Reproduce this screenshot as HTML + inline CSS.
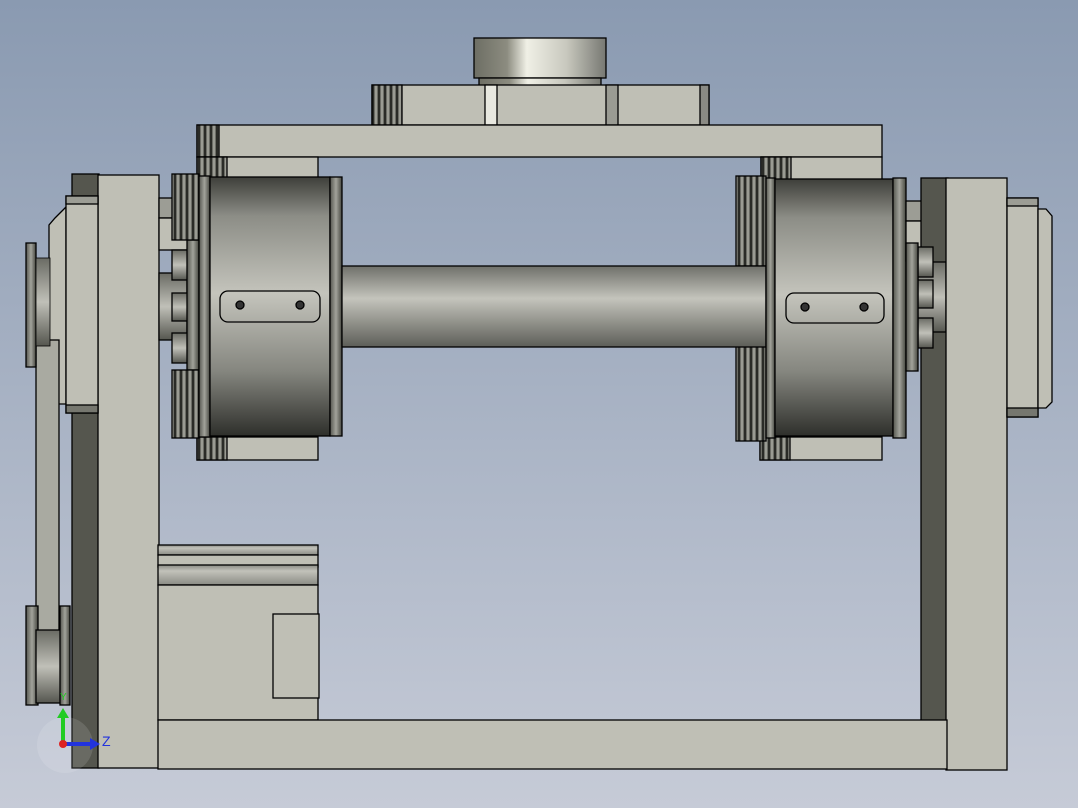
<!DOCTYPE html>
<html><head><meta charset="utf-8"><style>
html,body{margin:0;padding:0;width:1078px;height:808px;overflow:hidden}
svg{display:block}
</style></head><body>
<svg width="1078" height="808" viewBox="0 0 1078 808" xmlns="http://www.w3.org/2000/svg">
<defs>
<linearGradient id="bg" x1="0" y1="0" x2="0" y2="1"><stop offset="0" stop-color="#8a9ab1"/><stop offset="1" stop-color="#c6cbd7"/></linearGradient>
<linearGradient id="drum" x1="0" y1="0" x2="0" y2="1"><stop offset="0" stop-color="#3e3f3a"/><stop offset="0.15" stop-color="#8c8d86"/><stop offset="0.45" stop-color="#c4c4bc"/><stop offset="0.75" stop-color="#85867f"/><stop offset="1" stop-color="#2e2f2b"/></linearGradient>
<linearGradient id="shaft" x1="0" y1="0" x2="0" y2="1"><stop offset="0" stop-color="#6f706a"/><stop offset="0.4" stop-color="#c4c4bc"/><stop offset="1" stop-color="#5d5e58"/></linearGradient>
<linearGradient id="flange" x1="0" y1="0" x2="1" y2="0"><stop offset="0" stop-color="#55564f"/><stop offset="0.5" stop-color="#a2a39b"/><stop offset="1" stop-color="#45463f"/></linearGradient>
<linearGradient id="cyl" x1="0" y1="0" x2="1" y2="0"><stop offset="0" stop-color="#6d6e64"/><stop offset="0.25" stop-color="#8c8c80"/><stop offset="0.4" stop-color="#f0f0e6"/><stop offset="0.7" stop-color="#c8c8be"/><stop offset="1" stop-color="#777872"/></linearGradient>
<linearGradient id="hub" x1="0" y1="0" x2="0" y2="1"><stop offset="0" stop-color="#6a6b64"/><stop offset="0.5" stop-color="#c0c0b8"/><stop offset="1" stop-color="#55564f"/></linearGradient>
<linearGradient id="rod" x1="0" y1="0" x2="0" y2="1"><stop offset="0" stop-color="#8a8b84"/><stop offset="0.3" stop-color="#c2c2ba"/><stop offset="1" stop-color="#8a8b84"/></linearGradient>
<pattern id="groove" width="6" height="10" patternUnits="userSpaceOnUse"><rect width="6" height="10" fill="#6c6d66"/><rect x="0" width="2" height="10" fill="#2a2b27"/><rect x="3" width="2" height="10" fill="#9a9b93"/></pattern>
</defs>
<rect width="1078" height="808" fill="url(#bg)"/>
<g stroke="#000" stroke-width="1.3">
<rect x="474" y="38" width="132" height="40" fill="url(#cyl)"/>
<rect x="479" y="78" width="122" height="8" fill="url(#cyl)"/>
<rect x="372" y="85" width="337" height="40" fill="#bfbfb5"/>
<rect x="372" y="85" width="30" height="40" fill="url(#groove)"/>
<rect x="485" y="85" width="12" height="40" fill="#e8e8e0"/>
<rect x="606" y="85" width="12" height="40" fill="#9a9b93"/>
<rect x="700" y="85" width="9" height="40" fill="#8a8a84"/>
<rect x="197" y="125" width="685" height="32" fill="#bfbfb5"/>
<rect x="197" y="125" width="22" height="32" fill="url(#groove)"/>
<rect x="197" y="157" width="121" height="23" fill="#bfbfb5"/>
<rect x="197" y="157" width="30" height="23" fill="url(#groove)"/>
<rect x="761" y="157" width="121" height="23" fill="#bfbfb5"/>
<rect x="761" y="157" width="30" height="23" fill="url(#groove)"/>
<rect x="197" y="437" width="121" height="23" fill="#bfbfb5"/>
<rect x="197" y="437" width="30" height="23" fill="url(#groove)"/>
<rect x="760" y="437" width="122" height="23" fill="#bfbfb5"/>
<rect x="760" y="437" width="30" height="23" fill="url(#groove)"/>
<rect x="72" y="174" width="27" height="594" fill="#55564e"/>
<rect x="98" y="175" width="61" height="593" fill="#bfbfb5"/>
<path d="M66 207 L55 218 L49 225 L49 397 L56 404 L66 404 Z" fill="#bfbfb5"/>
<rect x="66" y="196" width="32" height="217" fill="#bfbfb5"/>
<rect x="66" y="196" width="32" height="8" fill="#9c9d95"/>
<rect x="66" y="405" width="32" height="8" fill="#76776f"/>
<rect x="36" y="340" width="23" height="360" fill="#a9aaa1"/>
<rect x="26" y="243" width="10" height="124" fill="url(#flange)"/>
<rect x="36" y="258" width="14" height="88" fill="url(#hub)" stroke-width="0.8"/>
<rect x="26" y="606" width="12" height="99" fill="url(#flange)"/>
<rect x="36" y="630" width="25" height="73" fill="url(#hub)"/>
<rect x="60" y="606" width="10" height="99" fill="url(#flange)"/>
<rect x="159" y="198" width="38" height="20" fill="#9c9d95"/>
<rect x="159" y="218" width="38" height="32" fill="#bfbfb5"/>
<rect x="159" y="273" width="28" height="67" fill="url(#hub)"/>
<rect x="172" y="250" width="16" height="30" fill="url(#hub)"/>
<rect x="172" y="293" width="16" height="28" fill="url(#hub)"/>
<rect x="172" y="333" width="16" height="30" fill="url(#hub)"/>
<rect x="187" y="240" width="12" height="130" fill="url(#flange)"/>
<rect x="172" y="174" width="27" height="66" fill="url(#groove)"/>
<rect x="172" y="370" width="27" height="68" fill="url(#groove)"/>
<rect x="199" y="176" width="11" height="261" fill="url(#flange)"/>
<rect x="210" y="177" width="120" height="259" fill="url(#drum)"/>
<rect x="330" y="177" width="12" height="259" fill="url(#flange)"/>
<rect x="220" y="291" width="100" height="31" rx="8" fill="none"/>
<circle cx="240" cy="305" r="4" fill="#333"/>
<circle cx="300" cy="305" r="4" fill="#333"/>
<rect x="736" y="176" width="30" height="90" fill="url(#groove)"/>
<rect x="736" y="346" width="30" height="95" fill="url(#groove)"/>
<rect x="342" y="266" width="424" height="81" fill="url(#shaft)"/>
<rect x="766" y="178" width="9" height="260" fill="url(#flange)"/>
<rect x="775" y="179" width="118" height="257" fill="url(#drum)"/>
<rect x="893" y="178" width="13" height="260" fill="url(#flange)"/>
<rect x="786" y="293" width="98" height="30" rx="8" fill="none"/>
<circle cx="805" cy="307" r="4" fill="#333"/>
<circle cx="864" cy="307" r="4" fill="#333"/>
<rect x="906" y="201" width="40" height="20" fill="#9c9d95"/>
<rect x="906" y="221" width="40" height="40" fill="#bfbfb5"/>
<rect x="921" y="178" width="27" height="545" fill="#55564e"/>
<rect x="918" y="262" width="28" height="70" fill="url(#hub)"/>
<rect x="918" y="247" width="15" height="30" fill="url(#hub)"/>
<rect x="918" y="280" width="15" height="28" fill="url(#hub)"/>
<rect x="918" y="318" width="15" height="30" fill="url(#hub)"/>
<rect x="906" y="243" width="12" height="128" fill="url(#flange)"/>
<rect x="946" y="178" width="61" height="592" fill="#bfbfb5"/>
<rect x="1007" y="198" width="31" height="219" fill="#bfbfb5"/>
<rect x="1007" y="198" width="31" height="8" fill="#9c9d95"/>
<rect x="1007" y="408" width="31" height="9" fill="#76776f"/>
<path d="M1038 209 L1046 209 L1052 216 L1052 402 L1046 408 L1038 408 Z" fill="#bfbfb5"/>
<rect x="158" y="545" width="160" height="10" fill="url(#rod)"/>
<rect x="158" y="555" width="160" height="12" fill="#bfbfb5"/>
<rect x="158" y="565" width="160" height="20" fill="url(#rod)"/>
<rect x="158" y="585" width="160" height="135" fill="#bfbfb5"/>
<rect x="273" y="614" width="46" height="84" fill="#bfbfb5"/>
<rect x="158" y="720" width="789" height="49" fill="#bfbfb5"/>
</g>
<circle cx="65" cy="745" r="28" fill="#ffffff" opacity="0.12"/>
<line x1="63" y1="745" x2="63" y2="716" stroke="#22cc22" stroke-width="4"/>
<path d="M57 718 L63 708 L69 718 Z" fill="#22cc22"/>
<line x1="63" y1="744" x2="92" y2="744" stroke="#2233dd" stroke-width="4"/>
<path d="M90 738 L100 744 L90 750 Z" fill="#2233dd"/>
<circle cx="63" cy="744" r="4" fill="#dd2222"/>
<text x="102" y="746" font-family="Liberation Sans, sans-serif" font-size="14" fill="#2233dd">Z</text>
<text x="60" y="700" font-family="Liberation Sans, sans-serif" font-size="10" fill="#22cc22">Y</text>
</svg>
</body></html>
